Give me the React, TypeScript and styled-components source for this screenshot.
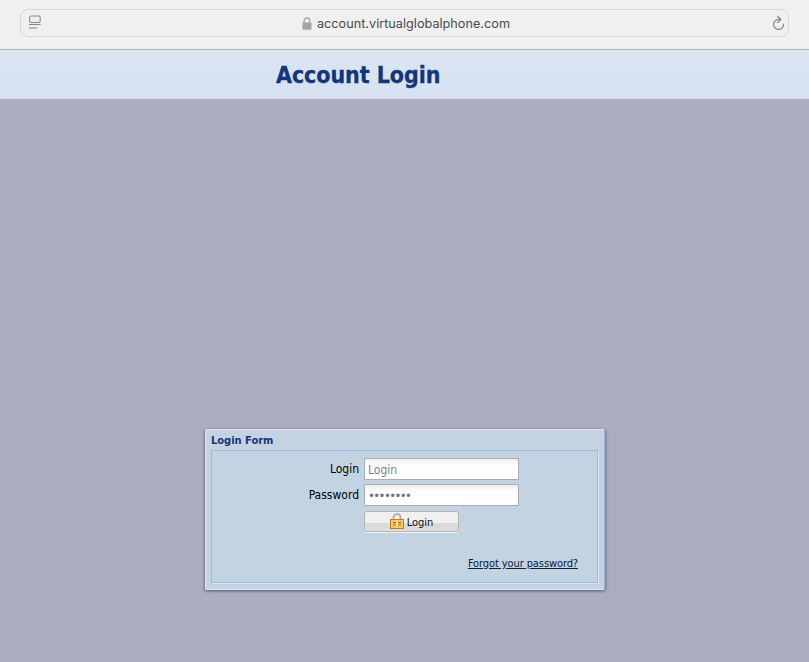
import React from "react";
import styled, { createGlobalStyle } from "styled-components";

const Global = createGlobalStyle`
  html, body { margin: 0; padding: 0; height: 100%; background: #abaebf; overflow: hidden; }
  #root { height: 100%; }
`;

const Page = styled.div`
  display: flex;
  flex-direction: column;
  height: 662px;
  background: #abaebf;
`;

const BrowserBar = styled.div`
  box-sizing: content-box;
  height: 28px;
  padding: 9px 20px 12px;
  background: #f0f0f0;
  border-bottom: 1px solid #b3b6bd;
`;

const AddressField = styled.div`
  position: relative;
  display: flex;
  align-items: center;
  justify-content: center;
  gap: 5px;
  height: 28px;
  box-sizing: border-box;
  border: 1px solid #d6d6d6;
  border-radius: 8px;
  background: #f0f0f0;
  padding: 0 0 0 3px;
`;

const FieldIcon = styled.svg<{ $side: "left" | "right" }>`
  position: absolute;
  top: 5px;
  ${(p) => (p.$side === "left" ? "left: 8px;" : "right: 2px;")}
`;

const Url = styled.span`
  font: 12.7px/1 "Inter", "Liberation Sans", sans-serif;
  color: #4b4b4b;
  padding-top: 2px;
`;

const Header = styled.header`
  height: 49px;
  box-sizing: border-box;
  padding: 2px 0 0 276px;
  background: linear-gradient(#dbe5f3, #d6e2f2);
  display: flex;
  align-items: center;
`;

const Title = styled.h1`
  margin: 0;
  font: bold 23px/1 "DejaVu Sans", sans-serif;
  font-stretch: condensed;
  letter-spacing: -0.08px;
  -webkit-text-stroke: 0.3px #15357b;
  color: #15357b;
`;

const Main = styled.main`
  flex: 1;
  display: flex;
  justify-content: flex-start;
  padding: 330px 0 0 205px;
`;

const Panel = styled.section`
  width: 400px;
  height: 161px;
  box-sizing: border-box;
  padding: 4px 6px 6px 5px;
  background: #c4d3e1;
  border: 1px solid #dfe7f1;
  border-right-color: #9fb6da;
  border-radius: 2px;
  box-shadow: -1px 1px 3px rgba(60, 62, 80, 0.45), 1px 1px 3px rgba(60, 62, 80, 0.45);
  display: flex;
  flex-direction: column;
`;

const PanelTitle = styled.div`
  font: bold 11px/13px "DejaVu Sans", sans-serif;
  font-stretch: condensed;
  color: #15357b;
  height: 16px;
`;

const Fieldset = styled.div`
  flex: 1;
  border: 1px solid #9db7e6;
  box-shadow: 1px 1px 0 #dbe5f2;
  padding: 7px 19px 0 0;
  display: flex;
  flex-direction: column;
`;

const Row = styled.div`
  display: grid;
  grid-template-columns: 147px 155px;
  column-gap: 5px;
  align-items: center;
  height: 22px;
  margin-bottom: 4px;
`;

const Label = styled.label`
  text-align: right;
  font: 12px/1 "DejaVu Sans", sans-serif;
  font-stretch: condensed;
  color: #000;
`;

const Input = styled.input`
  width: 155px;
  height: 22px;
  box-sizing: border-box;
  border: 1px solid #a9abb9;
  padding: 1px 3px 0;
  background: linear-gradient(#eeeeee, #ffffff 7px);
  font: 12px/1 "DejaVu Sans", sans-serif;
  font-stretch: condensed;
  color: #777;
  outline: none;
  &::placeholder { color: #808080; opacity: 1; }
  &[type="password"] { letter-spacing: -1.6px; font-size: 13px; }
`;

const LoginButton = styled.button`
  grid-column: 2;
  width: 95px;
  height: 21px;
  box-sizing: border-box;
  border: 1px solid #b5b5b5;
  border-radius: 3px;
  padding: 2px 0 0;
  background: linear-gradient(#f1f1f1 0, #f1f1f1 60%, #d9d9d9 60%, #dddddd 100%);
  display: flex;
  align-items: center;
  justify-content: center;
  gap: 3px;
  font: 11px/1 "DejaVu Sans", sans-serif;
  font-stretch: condensed;
  color: #111;
  box-shadow: 0 1px 0 #eef1f5;
  svg { margin-top: -3px; }
`;

const LinkRow = styled.div`
  display: flex;
  justify-content: flex-end;
  margin-top: 21px;
`;

const ForgotLink = styled.a`
  font: 11px/13px "DejaVu Sans", sans-serif;
  font-stretch: condensed;
  letter-spacing: -0.1px;
  color: #06203a;
  text-decoration: underline;
`;

const SidebarIcon = () => (
  <FieldIcon $side="left" width="13" height="16" viewBox="0 0 13 16" fill="none">
    <rect x="0.6" y="1" width="10.6" height="6.5" rx="1.5" stroke="#8a8a8a" strokeWidth="1.1" />
    <path d="M0 9.5H11.6" stroke="#8a8a8a" strokeWidth="1.1" />
    <path d="M0 13H8" stroke="#8a8a8a" strokeWidth="1.1" />
  </FieldIcon>
);

const ReloadIcon = () => (
  <FieldIcon $side="right" width="16" height="18" viewBox="0 0 16 18" fill="none">
    <path d="M10 4.6A5 5 0 1 0 13.6 9" stroke="#808080" strokeWidth="1.1" strokeLinecap="round" />
    <path d="M7.5 1.5L11 4.5L7.5 7.5" stroke="#808080" strokeWidth="1.1" strokeLinecap="round" strokeLinejoin="round" />
  </FieldIcon>
);

const PadlockIcon = () => (
  <svg width="10" height="13" viewBox="0 0 10 13" fill="none">
    <path d="M2.2 6V3.6C2.2 2 3.3 1 5 1s2.8 1 2.8 2.6V6" stroke="#a3a3a3" strokeWidth="1.3" />
    <rect x="0.5" y="5.5" width="9" height="7.2" rx="1" fill="#a3a3a3" />
  </svg>
);

const GoldLock = () => (
  <svg width="14" height="16" viewBox="0 0 14 16" fill="none">
    <path d="M3.5 8V4.5C3.5 2.6 5 1.2 7 1.2s3.5 1.4 3.5 3.3V7" stroke="#a8a8a8" strokeWidth="1.7" />
    <rect x="0.5" y="6.5" width="13" height="9" fill="#f6c765" stroke="#c8752c" />
    <rect x="3" y="9" width="8" height="1.3" fill="#a86f24" />
    <rect x="3" y="11.3" width="8" height="1.3" fill="#c48a38" />
    <rect x="6" y="8.6" width="2" height="4.4" fill="#fbe4a4" />
  </svg>
);

export default function App() {
  return (
    <>
      <Global />
      <Page>
        <BrowserBar>
          <AddressField>
            <SidebarIcon />
            <PadlockIcon />
            <Url>account.virtualglobalphone.com</Url>
            <ReloadIcon />
          </AddressField>
        </BrowserBar>
        <Header>
          <Title>Account Login</Title>
        </Header>
        <Main>
          <Panel>
            <PanelTitle>Login Form</PanelTitle>
            <Fieldset>
              <Row>
                <Label>Login</Label>
                <Input placeholder="Login" />
              </Row>
              <Row>
                <Label>Password</Label>
                <Input type="password" defaultValue="password" />
              </Row>
              <Row>
                <LoginButton>
                  <GoldLock />
                  Login
                </LoginButton>
              </Row>
              <LinkRow>
                <ForgotLink href="#">Forgot your password?</ForgotLink>
              </LinkRow>
            </Fieldset>
          </Panel>
        </Main>
      </Page>
    </>
  );
}
